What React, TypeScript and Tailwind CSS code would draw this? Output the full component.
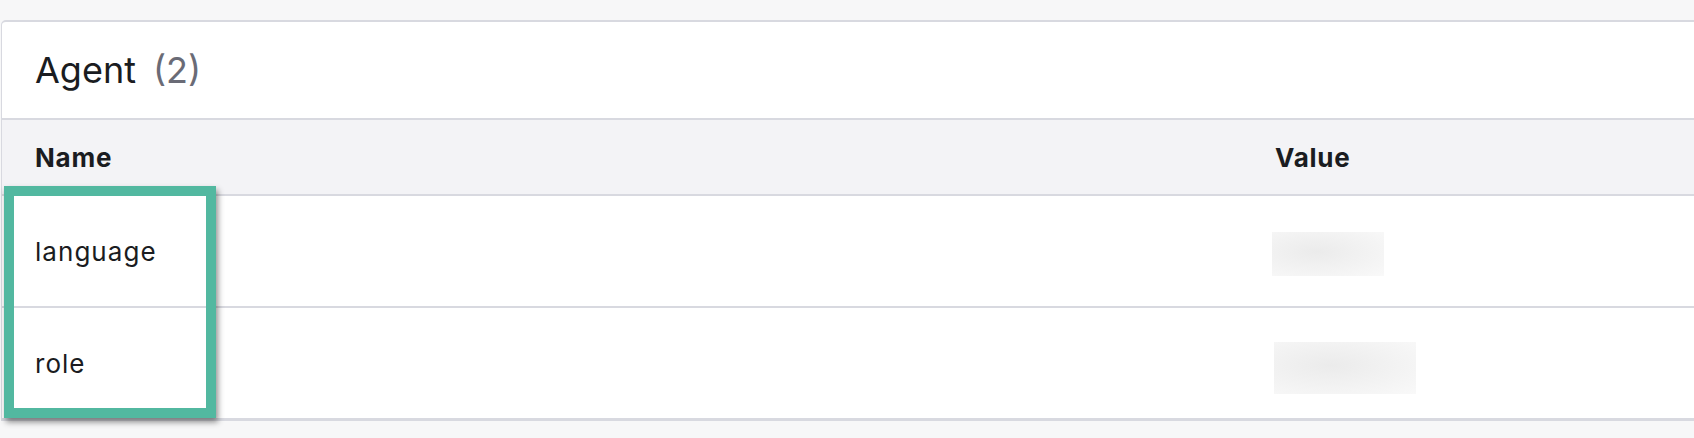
import React from "react";

const rows = [
  { name: "language", box: "w-[112px] h-[44px] ml-[-3px] mt-[6px]" },
  { name: "role", box: "w-[142px] h-[52px] ml-[-1px] mt-[10px]" },
];

export default function App() {
  return (
    <div
      className="relative h-[438px] w-[1694px] overflow-hidden bg-[#f7f7f8] pt-[20px]"
      style={{ fontFamily: "Inter, 'Noto Sans', sans-serif" }}
    >
      <div className="ml-[1px] w-[1760px] rounded-tl-[5px] border border-t-2 border-[#d8d9e0] bg-white">
        <div className="flex h-[98px] items-center border-b-2 border-[#d8d9e0] pl-[33px] text-[36px] text-[#1a1c21]">
          <span>Agent</span>
          <span className="ml-[17px] text-[#6a6b76]">(2)</span>
        </div>
        <div className="flex h-[76px] items-center border-b-2 border-[#d8d9e0] bg-[#f3f3f6] text-[26px] font-bold tracking-[0.03em] text-[#1a1c21]">
          <div className="w-[1240px] pl-[33px]">Name</div>
          <div className="pl-[33px]">Value</div>
        </div>
        {rows.map((r) => (
          <div
            key={r.name}
            className="flex h-[112px] items-center border-b-2 border-[#d8d9e0] text-[26px] tracking-[0.04em] text-[#1a1c21]"
          >
            <div className="w-[1240px] pl-[33px]">{r.name}</div>
            <div className="pl-[33px]">
              <div className={`${r.box} bg-[radial-gradient(ellipse_at_40%_45%,#ebebeb,#f9f9f9)]`} />
            </div>
          </div>
        ))}
      </div>
      <div className="absolute left-[4px] top-[186px] h-[232px] w-[212px] border-[10px] border-[#52b8a0] shadow-[2px_4px_6px_rgba(0,0,0,0.45)]" />
    </div>
  );
}
